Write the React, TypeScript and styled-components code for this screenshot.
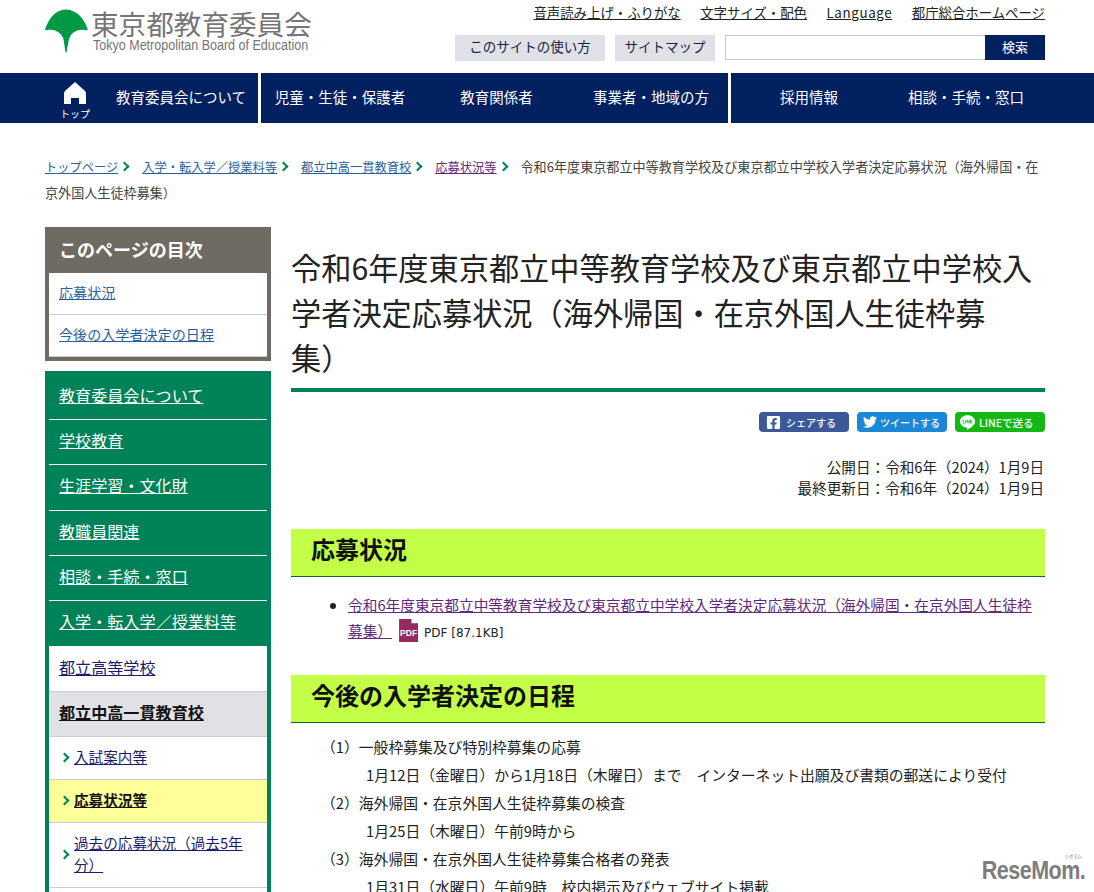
import React from "react";
import styled, { createGlobalStyle } from "styled-components";
import { FaFacebookSquare, FaTwitter } from "react-icons/fa";
import { SiLine } from "react-icons/si";

const Global = createGlobalStyle`
  html, body { margin: 0; padding: 0; height: 892px; overflow: hidden; background: #fff; }
  body {
    font-family: "Noto Sans CJK JP", "Noto Sans", sans-serif;
    color: #222;
    font-size: 14.7px;
    text-spacing-trim: space-all;
  }
  * { box-sizing: border-box; }
`;

const Page = styled.div`
  position: relative;
  width: 1094px;
  height: 892px;
  overflow: hidden;
`;

const Header = styled.header`
  height: 73px;
  padding: 0 49px 0 45px;
  display: flex;
  justify-content: space-between;
`;

const LogoBox = styled.div`
  display: flex;
  gap: 3px;
  padding-top: 9px;
`;

const LogoText = styled.div`
  display: flex;
  flex-direction: column;
  color: #757575;
`;

const LogoJa = styled.div`
  font-size: 27.6px;
  line-height: 29px;
  white-space: nowrap;
`;

const LogoEn = styled.div`
  font-family: "Liberation Sans", sans-serif;
  font-size: 14px;
  line-height: 15px;
  margin-left: 2px;
  transform-origin: left;
  transform: scaleX(0.895);
  white-space: nowrap;
`;

const HeaderRight = styled.div`
  display: flex;
  flex-direction: column;
  align-items: flex-end;
  padding-top: 3px;
`;

const TopLinks = styled.div`
  display: flex;
  gap: 19.500px;
  height: 32px;
`;

const TopLink = styled.a<{ $latin?: boolean }>`
  font-size: 13.4px;
  line-height: 18px;
  height: 20px;
  color: #222;
  text-decoration: underline;
  white-space: nowrap;
  letter-spacing: ${(p) => (p.$latin ? "0.6px" : "0")};
`;

const ToolRow = styled.div`
  display: flex;
  align-items: flex-start;
`;

const GreyBtn = styled.div<{ $w: number }>`
  background: #dfe1e7;
  color: #1a2340;
  height: 26px;
  line-height: 23px;
  font-size: 13.5px;
  text-align: center;
  margin-right: 10px;
  width: ${(p) => p.$w}px;
`;

const SearchInput = styled.div`
  width: 260px;
  height: 25px;
  border: 1px solid #c8c8c8;
  border-right: none;
  background: #fff;
`;

const SearchBtn = styled.div`
  width: 60px;
  height: 25px;
  background: #00205f;
  color: #fff;
  font-size: 13px;
  line-height: 23px;
  text-align: center;
`;

const Nav = styled.nav`
  height: 50px;
  display: flex;
  gap: 3px;
`;

const NavGroup = styled.div<{ $w: number }>`
  background: #00205f;
  width: ${(p) => p.$w}px;
  display: flex;
  align-items: center;
  color: #fff;
`;

const NavItem = styled.div<{ $w: number }>`
  width: ${(p) => p.$w}px;
  text-align: center;
  font-size: 14.5px;
  line-height: 46px;
  height: 48px;
  white-space: nowrap;
`;

const HomeItem = styled.div`
  width: 88px;
  margin-left: 31px;
  margin-right: -3px;
  padding-top: 5px;
  display: flex;
  flex-direction: column;
  align-items: center;
  svg { display: block; flex: none; }
`;

const HomeLabel = styled.div`
  font-size: 10px;
  line-height: 12px;
  margin-top: 4px;
`;

const Crumbs = styled.div`
  padding: 31px 49px 0 45px;
  font-size: 12.25px;
  line-height: 26px;
  color: #444;
  height: 104px;
`;

const Crumb = styled.a<{ $visited?: boolean }>`
  color: ${(p) => (p.$visited ? "#5f2a7c" : "#2a5f9e")};
  text-decoration: underline;
`;

const CurrentCrumb = styled.span`
  font-size: 13.1px;
`;

const Sep = styled.span`
  display: inline-block;
  width: 24px;
  height: 10px;
  position: relative;
  &::after {
    content: "";
    position: absolute;
    left: 3px;
    top: 1px;
    width: 5px;
    height: 5px;
    border-top: 2px solid #008259;
    border-right: 2px solid #008259;
    transform: rotate(45deg);
  }
`;

const Body = styled.div`
  display: flex;
  gap: 20px;
  padding: 0 49px 0 45px;
`;

const Side = styled.aside`
  width: 226px;
  flex: none;
`;

const Toc = styled.div`
  background: #6f6b62;
  padding: 0 4px 4px;
  margin-bottom: 10px;
`;

const TocTitle = styled.div`
  color: #fff;
  font-size: 18px;
  font-weight: 700;
  height: 46px;
  line-height: 45px;
  padding-left: 10px;
`;

const TocItem = styled.a`
  display: block;
  background: #fff;
  height: 42px;
  line-height: 38px;
  padding-left: 10px;
  border-bottom: 1px solid #ccc;
  font-size: 14.1px;
  color: #2a5f9e;
  text-decoration: underline;
`;

const Green = styled.div`
  background: #008259;
  padding: 4px 4px 0;
`;

const GreenItem = styled.a<{ $last?: boolean }>`
  display: block;
  height: 45.200px;
  line-height: 41.500px;
  padding-left: 10px;
  font-size: 16.100px;
  color: #fff;
  text-decoration: underline;
  border-bottom: ${(p) => (p.$last ? "none" : "1px solid #fff")};
`;

const SecondItem = styled.a<{ $active?: boolean }>`
  display: block;
  height: 45.500px;
  line-height: ${(p) => (p.$active ? 41.5 : 42.5)}px;
  padding-left: 10px;
  font-size: 16.100px;
  color: ${(p) => (p.$active ? "#111" : "#1a1a6e")};
  font-weight: ${(p) => (p.$active ? 700 : 400)};
  background: ${(p) => (p.$active ? "#dfe1e7" : "#fff")};
  text-decoration: underline;
  border-bottom: 1px solid #ccc;
`;

const ThirdItem = styled.div<{ $active?: boolean; $tall?: boolean }>`
  display: flex;
  align-items: center;
  gap: 6px;
  min-height: ${(p) => (p.$tall ? 65 : 43)}px;
  padding: 0 10px 2px 12px;
  background: ${(p) => (p.$active ? "#ffff99" : "#fff")};
  border-bottom: 1px solid #ccc;
`;

const ThirdLink = styled.a<{ $active?: boolean }>`
  font-size: 14.6px;
  line-height: 22px;
  color: ${(p) => (p.$active ? "#111" : "#1a1a6e")};
  font-weight: ${(p) => (p.$active ? 700 : 400)};
  text-decoration: underline;
`;

const Chevron = styled.span`
  flex: none;
  width: 7px;
  height: 7px;
  border-top: 2px solid #008259;
  border-right: 2px solid #008259;
  transform: rotate(45deg);
`;

const Main = styled.main`
  flex: 1;
  min-width: 0;
`;

const Title = styled.h1`
  margin: 0;
  font-size: 30.2px;
  font-weight: 400;
  line-height: 45px;
  padding: 18px 0 8px;
  border-bottom: 4px solid #008259;
  color: #222;
`;

const Shares = styled.div`
  display: flex;
  justify-content: flex-end;
  gap: 8px;
  margin-top: 20px;
`;

const Share = styled.div<{ $bg: string; $pad: number; $gap: number; $size: number }>`
  width: 90px;
  height: 20px;
  border-radius: 4px;
  padding-left: ${(p) => p.$pad}px;
  background: ${(p) => p.$bg};
  color: #fff;
  font-size: ${(p) => p.$size}px;
  font-weight: 500;
  line-height: 19px;
  display: flex;
  align-items: center;
  gap: ${(p) => p.$gap}px;
  white-space: nowrap;
  svg { flex: none; }
`;

const Dates = styled.div`
  margin-top: 24px;
  text-align: right;
  font-size: 14.6px;
  line-height: 21px;
  margin-right: 1px;
`;

const H2 = styled.h2`
  margin: 0;
  background: #c3ff46;
  border-bottom: 1px solid #1a5f30;
  font-size: 24px;
  font-weight: 700;
  height: 48px;
  line-height: 40px;
  padding-left: 20px;
  color: #111;
`;

const FirstH2 = styled(H2)`
  margin-top: 31px;
`;

const FileList = styled.ul`
  margin: 15px 0 0;
  padding: 0 0 0 57px;
  height: 83px;
  font-size: 14.7px;
  line-height: 26px;
`;

const FileLink = styled.a`
  color: #5f2a7c;
  text-decoration: underline;
`;

const PdfIcon = styled.span`
  display: inline-block;
  width: 19px;
  height: 23px;
  margin: 0 6px 0 7px;
  vertical-align: 1px;
  background: #952a63;
  color: #fff;
  font-size: 8.5px;
  font-weight: 700;
  line-height: 28px;
  text-align: center;
  clip-path: polygon(0 0, 65% 0, 65% 18%, 100% 18%, 100% 100%, 0 100%);
  font-family: "Liberation Sans", sans-serif;
`;

const PdfText = styled.span`
  font-size: 12px;
  font-family: "DejaVu Sans", sans-serif;
`;

const Schedule = styled.div`
  padding: 10px 0 0 30px;
  font-size: 14.8px;
  line-height: 28px;
  white-space: pre;
`;

const Indented = styled.div`
  padding-left: 45px;
`;

const Mark = styled.div`
  position: absolute;
  right: 9px;
  bottom: 10px;
  font-family: "Liberation Sans", sans-serif;
  font-weight: 700;
  font-size: 25px;
  line-height: 24px;
  letter-spacing: -0.6px;
  color: #7d7d7d;
  transform-origin: right;
  transform: scaleX(0.86);
  white-space: nowrap;
`;

const MarkKana = styled.span`
  position: absolute;
  top: -5px;
  right: 4px;
  font-size: 5px;
  line-height: 6px;
  letter-spacing: 0;
  font-weight: 400;
  font-family: "Noto Sans CJK JP", sans-serif;
`;

export default function App() {
  return (
    <Page>
      <Global />
      <Header>
        <LogoBox>
          <svg width="43" height="44" viewBox="0 0 43 44">
            <path fill="#009a44" d="M21 0.500C32 0.500 39 10 42.500 19.500C43 21 42 21.500 40.500 21.200C33 19.500 26.500 23 24 30L21.500 43.500H20.500L18.500 30C16 23 9 19.500 2 21.200C0.500 21.500 -0.200 21 0.300 19.500C4 10 10 0.500 21 0.500Z" />
          </svg>
          <LogoText>
            <LogoJa>東京都教育委員会</LogoJa>
            <LogoEn>Tokyo Metropolitan Board of Education</LogoEn>
          </LogoText>
        </LogoBox>
        <HeaderRight>
          <TopLinks>
            <TopLink>音声読み上げ・ふりがな</TopLink>
            <TopLink>文字サイズ・配色</TopLink>
            <TopLink $latin>Language</TopLink>
            <TopLink>都庁総合ホームページ</TopLink>
          </TopLinks>
          <ToolRow>
            <GreyBtn $w={150}>このサイトの使い方</GreyBtn>
            <GreyBtn $w={100}>サイトマップ</GreyBtn>
            <SearchInput />
            <SearchBtn>検索</SearchBtn>
          </ToolRow>
        </HeaderRight>
      </Header>
      <Nav>
        <NavGroup $w={258}>
          <HomeItem>
            <svg width="22" height="22" viewBox="0 0 22 22">
              <path fill="#fff" d="M11 0L20.500 8.500C21.500 9.500 22 10.500 22 12V22H15V16H7V22H0V12C0 10.500 0.500 9.500 1.500 8.500Z" />
            </svg>
            <HomeLabel>トップ</HomeLabel>
          </HomeItem>
          <NavItem $w={130}>教育委員会について</NavItem>
        </NavGroup>
        <NavGroup $w={467}>
          <NavItem $w={158}>児童・生徒・保護者</NavItem>
          <NavItem $w={155}>教育関係者</NavItem>
          <NavItem $w={154}>事業者・地域の方</NavItem>
        </NavGroup>
        <NavGroup $w={363}>
          <NavItem $w={156}>採用情報</NavItem>
          <NavItem $w={158}>相談・手続・窓口</NavItem>
        </NavGroup>
      </Nav>
      <Crumbs>
        <Crumb>トップページ</Crumb>
        <Sep />
        <Crumb>入学・転入学／授業料等</Crumb>
        <Sep />
        <Crumb>都立中高一貫教育校</Crumb>
        <Sep />
        <Crumb $visited>応募状況等</Crumb>
        <Sep />
        <CurrentCrumb>令和6年度東京都立中等教育学校及び東京都立中学校入学者決定応募状況（海外帰国・在京外国人生徒枠募集）</CurrentCrumb>
      </Crumbs>
      <Body>
        <Side>
          <Toc>
            <TocTitle>このページの目次</TocTitle>
            <TocItem>応募状況</TocItem>
            <TocItem>今後の入学者決定の日程</TocItem>
          </Toc>
          <Green>
            <GreenItem>教育委員会について</GreenItem>
            <GreenItem>学校教育</GreenItem>
            <GreenItem>生涯学習・文化財</GreenItem>
            <GreenItem>教職員関連</GreenItem>
            <GreenItem>相談・手続・窓口</GreenItem>
            <GreenItem $last>入学・転入学／授業料等</GreenItem>
            <SecondItem>都立高等学校</SecondItem>
            <SecondItem $active>都立中高一貫教育校</SecondItem>
            <ThirdItem><Chevron /><ThirdLink>入試案内等</ThirdLink></ThirdItem>
            <ThirdItem $active><Chevron /><ThirdLink $active>応募状況等</ThirdLink></ThirdItem>
            <ThirdItem $tall><Chevron /><ThirdLink>過去の応募状況（過去5年分）</ThirdLink></ThirdItem>
            <ThirdItem />
          </Green>
        </Side>
        <Main>
          <Title>令和6年度東京都立中等教育学校及び東京都立中学校入学者決定応募状況（海外帰国・在京外国人生徒枠募集）</Title>
          <Shares>
            <Share $bg="#3b5998" $pad={7} $gap={5} $size={10}><FaFacebookSquare size={15} />シェアする</Share>
            <Share $bg="#1b87d6" $pad={6} $gap={3} $size={10}><FaTwitter size={14} />ツイートする</Share>
            <Share $bg="#14b814" $pad={5} $gap={4} $size={10.5}><SiLine size={15} />LINEで送る</Share>
          </Shares>
          <Dates>
            公開日：令和6年（2024）1月9日
            <br />
            最終更新日：令和6年（2024）1月9日
          </Dates>
          <FirstH2>応募状況</FirstH2>
          <FileList>
            <li>
              <FileLink>令和6年度東京都立中等教育学校及び東京都立中学校入学者決定応募状況（海外帰国・在京外国人生徒枠募集）</FileLink>
              <PdfIcon>PDF</PdfIcon>
              <PdfText>PDF [87.1KB]</PdfText>
            </li>
          </FileList>
          <H2>今後の入学者決定の日程</H2>
          <Schedule>
            <div>（1）一般枠募集及び特別枠募集の応募</div>
            <Indented>1月12日（金曜日）から1月18日（木曜日）まで　インターネット出願及び書類の郵送により受付</Indented>
            <div>（2）海外帰国・在京外国人生徒枠募集の検査</div>
            <Indented>1月25日（木曜日）午前9時から</Indented>
            <div>（3）海外帰国・在京外国人生徒枠募集合格者の発表</div>
            <Indented>1月31日（水曜日）午前9時　校内掲示及びウェブサイト掲載</Indented>
          </Schedule>
        </Main>
      </Body>
      <Mark>
        <MarkKana>リセマム</MarkKana>
        ReseMom.
      </Mark>
    </Page>
  );
}
